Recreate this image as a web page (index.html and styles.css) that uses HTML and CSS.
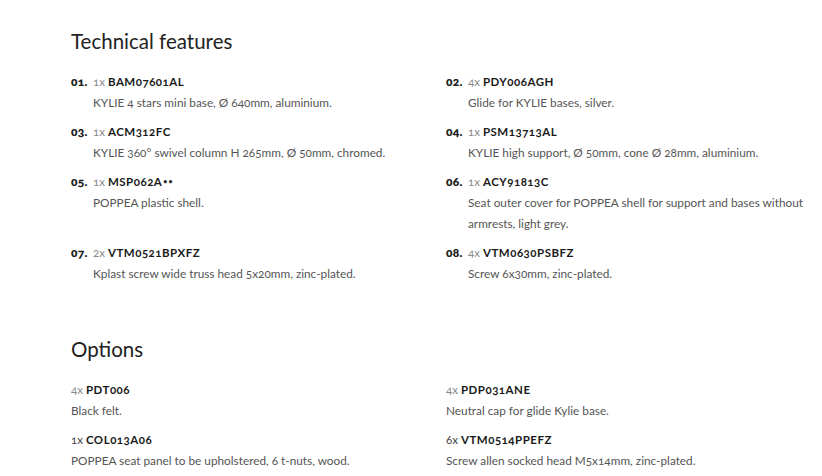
FILE: index.html
```html
<!DOCTYPE html>
<html>
<head>
<meta charset="utf-8">
<link rel="stylesheet" href="styles.css">
</head>
<body>
<section class="block">
  <h2 class="title">Technical features</h2>
  <div class="grid">
    <div class="item">
      <div class="head"><span class="num">01.</span><span class="qty">1x</span><span class="code">BAM07601AL</span></div>
      <div class="desc indent">KYLIE 4 stars mini base, Ø 640mm, aluminium.</div>
    </div>
    <div class="item">
      <div class="head"><span class="num">02.</span><span class="qty">4x</span><span class="code">PDY006AGH</span></div>
      <div class="desc indent">Glide for KYLIE bases, silver.</div>
    </div>
    <div class="item">
      <div class="head"><span class="num">03.</span><span class="qty">1x</span><span class="code">ACM312FC</span></div>
      <div class="desc indent">KYLIE 360° swivel column H 265mm, Ø 50mm, chromed.</div>
    </div>
    <div class="item">
      <div class="head"><span class="num">04.</span><span class="qty">1x</span><span class="code">PSM13713AL</span></div>
      <div class="desc indent">KYLIE high support, Ø 50mm, cone Ø 28mm, aluminium.</div>
    </div>
    <div class="item">
      <div class="head"><span class="num">05.</span><span class="qty">1x</span><span class="code">MSP062A<span class="dots">••</span></span></div>
      <div class="desc indent">POPPEA plastic shell.</div>
    </div>
    <div class="item">
      <div class="head"><span class="num">06.</span><span class="qty">1x</span><span class="code">ACY91813C</span></div>
      <div class="desc indent">Seat outer cover for POPPEA shell for support and bases without armrests, light grey.</div>
    </div>
    <div class="item">
      <div class="head"><span class="num">07.</span><span class="qty">2x</span><span class="code">VTM0521BPXFZ</span></div>
      <div class="desc indent">Kplast screw wide truss head 5x20mm, zinc-plated.</div>
    </div>
    <div class="item">
      <div class="head"><span class="num">08.</span><span class="qty">4x</span><span class="code">VTM0630PSBFZ</span></div>
      <div class="desc indent">Screw 6x30mm, zinc-plated.</div>
    </div>
  </div>
</section>
<section class="block options">
  <h2 class="title">Options</h2>
  <div class="grid">
    <div class="item">
      <div class="head"><span class="qty">4x</span><span class="code">PDT006</span></div>
      <div class="desc">Black felt.</div>
    </div>
    <div class="item">
      <div class="head"><span class="qty">4x</span><span class="code">PDP031ANE</span></div>
      <div class="desc">Neutral cap for glide Kylie base.</div>
    </div>
    <div class="item">
      <div class="head"><span class="qty dark">1x</span><span class="code">COL013A06</span></div>
      <div class="desc">POPPEA seat panel to be upholstered, 6 t-nuts, wood.</div>
    </div>
    <div class="item">
      <div class="head"><span class="qty dark">6x</span><span class="code">VTM0514PPEFZ</span></div>
      <div class="desc">Screw allen socked head M5x14mm, zinc-plated.</div>
    </div>
  </div>
</section>
</body>
</html>
```
FILE: styles.css
```css
html, body {
  margin: 0;
  padding: 0;
  background: #fff;
}
body {
  font-family: "Lato", "Noto Sans", sans-serif;
  font-variant-numeric: oldstyle-nums;
  color: #333;
  padding: 0 10px 0 71px;
}
.block {
  padding-top: 27px;
}
.options {
  padding-top: 51px;
}
.title {
  margin: 0 0 16px 0;
  font-size: 20.5px;
  font-weight: 400;
  line-height: 28px;
  color: #222;
}
.grid {
  display: grid;
  grid-template-columns: 375px 1fr;
  column-gap: 0;
  row-gap: 8px;
}
.head {
  display: flex;
  align-items: baseline;
  height: 21px;
  line-height: 21px;
  font-size: 12px;
}
.num {
  font-weight: 800;
  color: #222;
  width: 22px;
  letter-spacing: 0.3px;
}
.qty {
  color: #888;
  margin-right: 3px;
  font-size: 11.5px;
}
.qty.dark {
  color: #444;
}
.code {
  font-weight: 700;
  color: #1a1a1a;
  font-size: 11.5px;
  letter-spacing: 0.5px;
}
.dots {
  font-size: 7px;
  letter-spacing: 1px;
  margin-left: 1px;
  vertical-align: 2px;
}
.desc {
  font-size: 11.8px;
  line-height: 21px;
  color: #555;
}
.indent {
  padding-left: 22px;
}
```
